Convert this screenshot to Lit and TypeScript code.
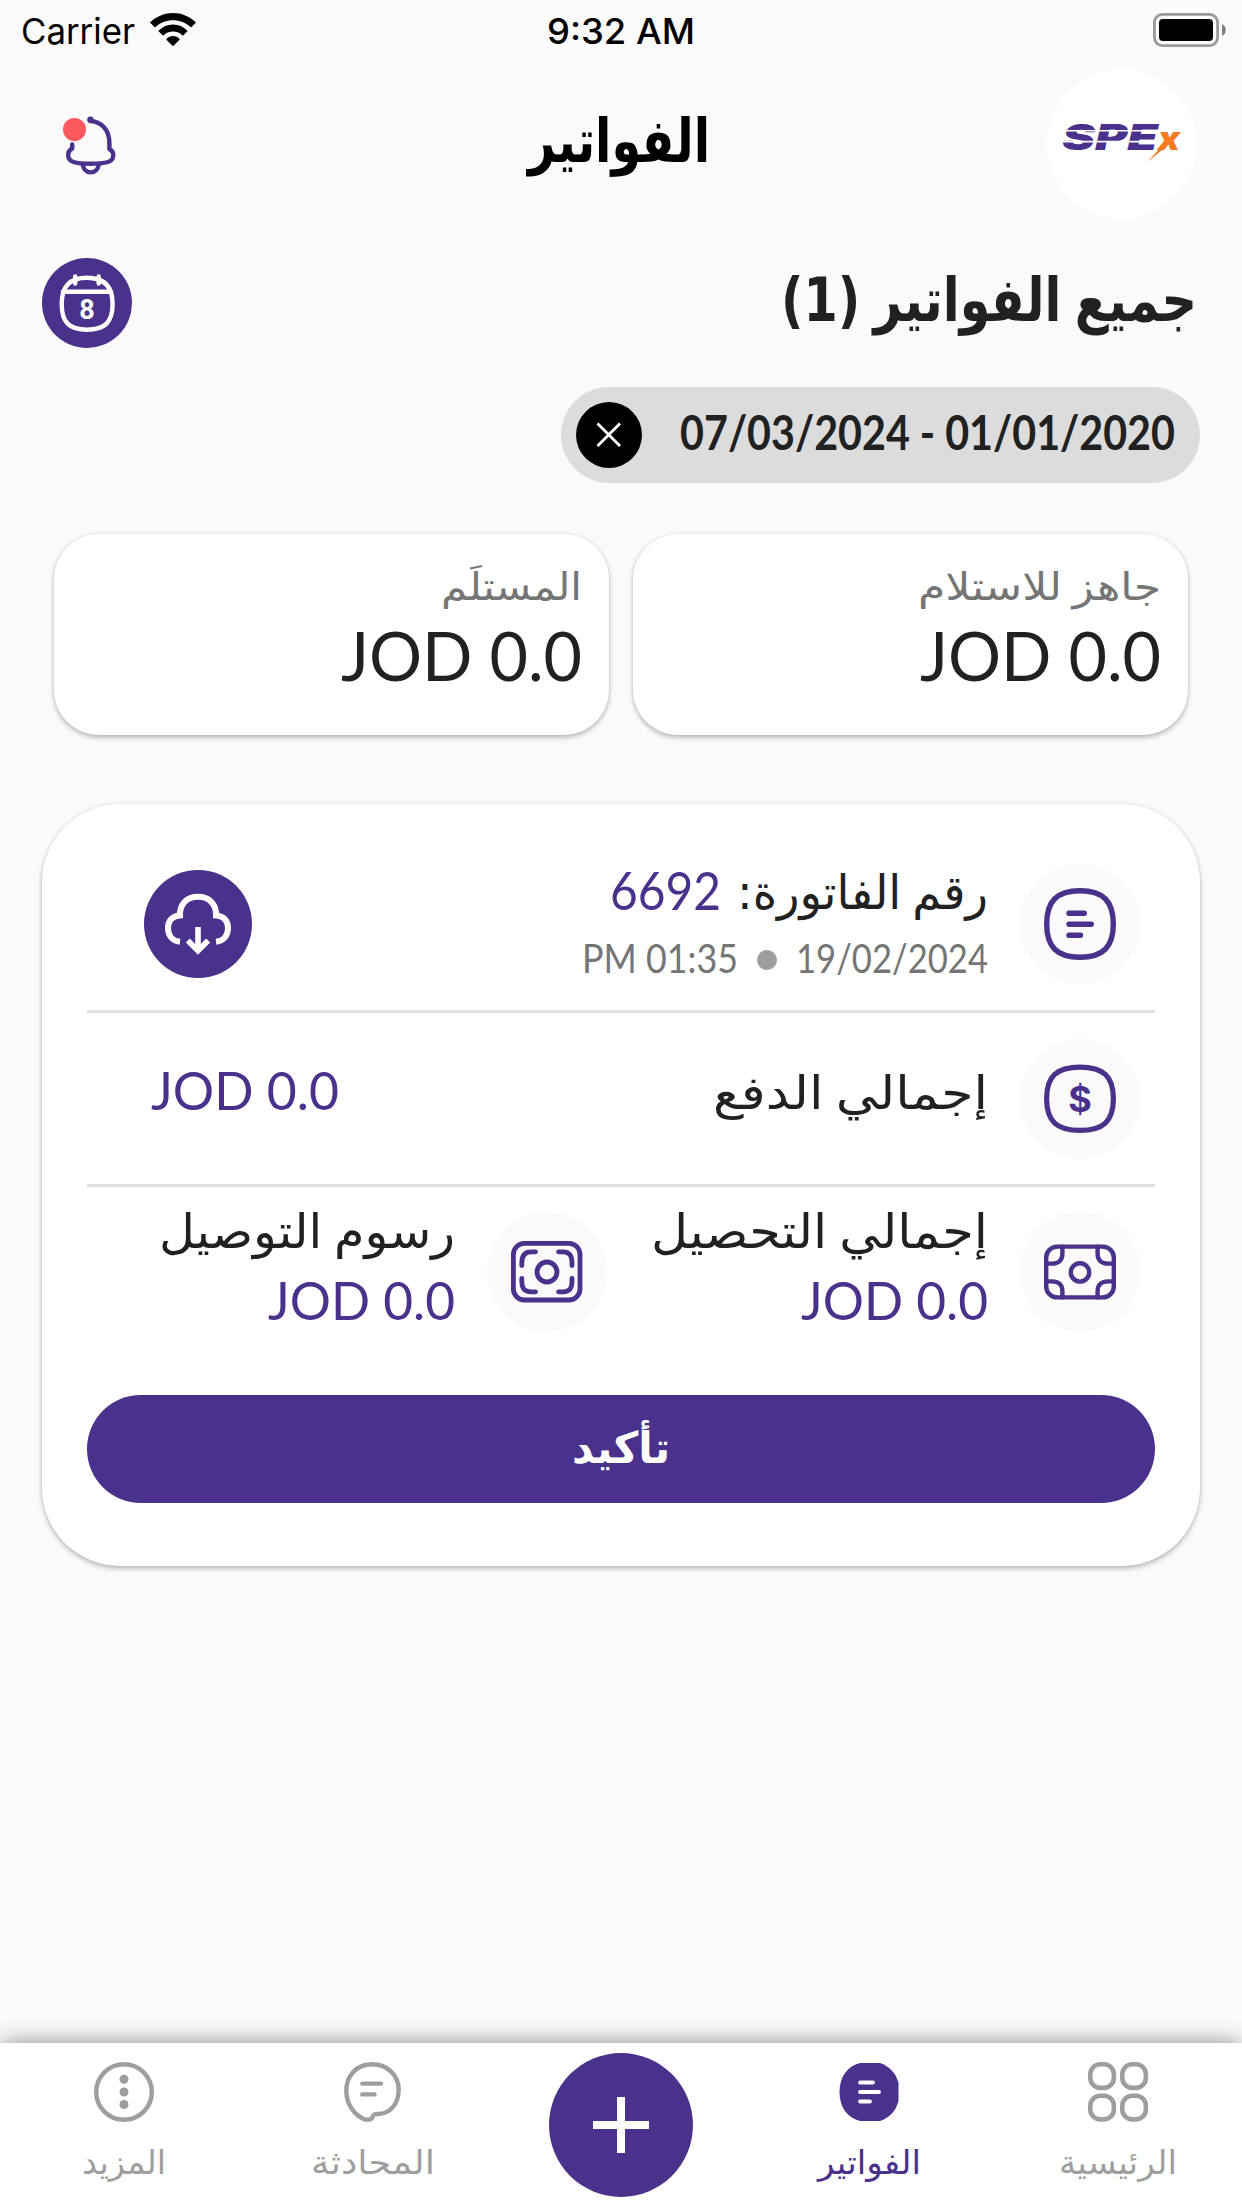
import { LitElement, html, css, svg } from "lit";
import { customElement, property } from "lit/decorators.js";

// Height of an upright stem relative to the font size, per script.
const STEM = { ar: 0.76, la: 0.72, ui: 0.727 };

/** A one-line label whose box is exactly its stem height and text width. */
@customElement("fit-label")
class FitLabel extends LitElement {
  @property() text = "";
  @property({ type: Number }) w = 100;
  @property({ type: Number }) h = 30;
  @property() script: "ar" | "la" | "ui" = "ar";
  static styles = css`
    :host { display: block; flex: none; }
    svg { display: block; overflow: visible; }
    text { fill: currentColor; text-anchor: middle; }
    .ar { font-family: "DejaVu Sans", "Noto Sans", sans-serif; direction: rtl; word-spacing: -0.08em; }
    .la { font-family: Lato, "Open Sans", sans-serif; direction: ltr; }
    .ui { font-family: Inter, Roboto, sans-serif; direction: ltr; }
  `;
  render() {
    return html`<svg width=${this.w} height=${this.h} viewBox="0 0 ${this.w} ${this.h}">
      <text class=${this.script} font-size=${this.h / STEM[this.script]}>${this.text}</text></svg>`;
  }
  updated() {
    const t = this.renderRoot.querySelector("text") as SVGTextElement;
    const natural = t.getComputedTextLength() || this.w;
    t.setAttribute("transform", `translate(${this.w / 2} ${this.h}) scale(${this.w / natural} 1)`);
  }
}

const label = (cls: string, text: string, w: number, h: number, script = "ar") =>
  html`<fit-label class=${cls} .text=${text} .w=${w} .h=${h} .script=${script}></fit-label>`;

const icon = (w: number, h: number, body: unknown) =>
  html`<svg class="icon" width=${w} height=${h} viewBox="0 0 ${w} ${h}">${body}</svg>`;

const icons = {
  wifi: icon(46, 34, svg`<g fill="#000">
    <path d="M0 9.5C13-3.2 33-3.2 46 9.5L41 14.5C31 4.8 15 4.8 5 14.5Z"/>
    <path d="M8.3 18C16.5 9.4 29.5 9.4 37.7 18L32.8 22.8C27.5 17.2 18.5 17.2 13.2 22.8Z"/>
    <path d="M16.2 26.4C20 22 26 22 29.8 26.4L23 33.2Z"/></g>`),
  battery: icon(73, 34, svg`<rect x="1.4" y="1.4" width="63.2" height="31.2" rx="8" fill="none" stroke="#999" stroke-width="2.8"/>
    <rect x="6" y="6" width="54" height="22" rx="4" fill="#000"/>
    <path d="M69 11C74 13.5 74 20.5 69 23Z" fill="#808080"/>`),
  bell: icon(60, 70, svg`<g class="ln" stroke-width="4.4">
    <path d="M30.5 9.5V11C42 12 49.4 20 49.4 33V39C55 42 54.5 50 48 52C40 54.4 21 54.4 13.5 52C7 50 6.3 42 12.2 38.5V34.5"/>
    <path d="M22.8 54.5C24 65 37.5 65 38.7 54.5"/></g><circle cx="30.4" cy="9.7" r="3.2" fill="#49318c"/>`),
  calendar: icon(90, 90, svg`<g class="ln wh" stroke-width="4.4">
    <path d="M19.7 46C19.7 28 28 19.7 45 19.7S70.6 28 70.6 46 63 71.7 45 71.7 19.7 64 19.7 46Z"/>
    <path d="M21 33.7H69M33.2 18.5V25.5M56.7 18.5V25.5"/></g>
    <text x="45" y="61.2" text-anchor="middle" class="day">8</text>`),
  close: icon(26, 26, svg`<path d="M1.5 1.5L24 24M24 1.5L1.5 24" stroke="#fff" stroke-width="2.8" fill="none"/>`),
  bill: icon(72, 72, svg`<g class="ln" stroke-width="5.4"><path d="M2.7 36C2.7 13 13 2.7 36 2.7S69.3 13 69.3 36 59 69.3 36 69.3 2.7 59 2.7 36Z"/>
    <path d="M25 25.2H40.3M25 36.2H47.3M25 47.2H36.5"/></g>`),
  dollar: icon(72, 72, svg`<g class="ln" stroke-width="5.2"><path d="M2.6 35.7C2.6 13 13 4.2 36 4.2S69.4 13 69.4 35.7 59 67.4 36 67.4 2.6 58.5 2.6 35.7Z"/></g>
    <text x="36" y="48.6" text-anchor="middle" class="usd">$</text>`),
  note: icon(72, 56, svg`<g class="ln" stroke-width="4.4"><rect x="2.2" y="2.6" width="67.6" height="50.8" rx="11"/>
    <path d="M2.2 19.6H8C14.5 19.6 18.4 16 18.4 10V2.6M69.8 19.6H64C57.5 19.6 53.6 16 53.6 10V2.6M2.2 37.4H8C14.5 37.4 18.4 41 18.4 47V53.4M69.8 37.4H64C57.5 37.4 53.6 41 53.6 47V53.4"/>
    <circle cx="36" cy="28.4" r="9.2"/></g>`),
  scan: icon(72, 62, svg`<g class="ln" stroke-width="4.8"><rect x="2.4" y="2.4" width="66.6" height="56.6" rx="11"/>
    <path d="M10.8 24.5V22C10.8 14 14 10.8 20 10.8H24.5M61 24.5V22C61 14 58 10.8 52 10.8H47.5M10.8 37.5V40C10.8 48 14 50.8 20 50.8H24.5M61 37.5V40C61 48 58 50.8 52 50.8H47.5"/>
    <circle cx="36" cy="31" r="10"/></g>`),
  cloud: icon(108, 108, svg`<g fill="none" stroke="#fff" stroke-width="6">
    <path d="M36 71.7C28 71 24 65 24 58C24 50.5 29 45.5 36 45.4C35.5 34 43 26.8 54 26.8S72.5 34 72 45.4C79 45.5 84 50.5 84 58C84 65 80 71 72 71.7"/>
    <path d="M54 57V80M43.8 70.5L54 80.7L64.2 70.5" stroke-width="5.6"/></g>`),
  grid: icon(60, 60, svg`<g class="ln" stroke-width="4.6">${[[2, 2], [34, 2], [2, 33.5], [34, 33.5]].map(
    ([x, y]) => svg`<rect x=${x + 0.3} y=${y + 0.3} width="23.6" height="23.6" rx="10"/>`)}</g>`),
  billFill: icon(60, 60, svg`<path fill="#49318c" d="M0.5 30C0.5 14 9 4 21 1H41C50 4 57 11 59.5 21V39C57 49 50 56 41 59H21C9 56 0.5 46 0.5 30Z"/>
    <path class="ln wh" stroke-width="3.8" d="M21 20.5H34M21 30H40M21 39.5H31"/>`),
  chat: icon(57, 60, svg`<g class="ln" stroke-width="4.4"><path d="M28 2.3C44 2.3 54.7 14 54.7 27.5C54.7 42 46 52 34 52C29.5 52 29.5 53 28.3 55.5C27.3 57.8 25 58 21 57.5C10 53 2.3 42 2.3 29C2.3 13 13 2.3 28 2.3Z"/>
    <path d="M18.3 21.6H37M18.3 32.4H30.5"/></g>`),
  more: icon(60, 60, svg`<circle class="ln" stroke-width="4.4" cx="30" cy="30" r="27.8"/>
    ${[17.3, 30, 42.5].map((y) => svg`<circle cx="30" cy=${y} r="4.5" fill="currentColor"/>`)}`),
  plus: icon(56, 56, svg`<path d="M28 0V56M0 28H56" stroke="#fff" stroke-width="8"/>`),
  logo: icon(150, 150, svg`<text class="brand" x="15" y="80.8" textLength="96" lengthAdjust="spacingAndGlyphs">SPE</text>
    <path d="M16 61.8H114M16 72.6H100" stroke="#fff" stroke-width="1.6"/>
    <text class="brandx" x="111" y="80.8" textLength="22" lengthAdjust="spacingAndGlyphs">x</text>
    <path d="M100.5 93L117.5 74L134 62.5L121 76Z" fill="#f47b20"/>`),
};

@customElement("app-root")
class AppRoot extends LitElement {
  static styles = css`
    :host {
      display: flex; flex-direction: column; box-sizing: border-box; width: 1242px; height: 2208px;
      overflow: hidden; background: #fafafa; color: #212121; direction: rtl;
      font-family: "DejaVu Sans", sans-serif; --p: #49318c;
    }
    .icon { display: block; flex: none; overflow: visible; }
    .ln { fill: none; stroke: currentColor; stroke-linecap: round; stroke-linejoin: round; }
    .wh { stroke: #fff; }
    .day { font: 700 27px Roboto, sans-serif; fill: #fff; }
    .usd { font: 700 36px Inter, sans-serif; fill: var(--p); }
    .brand { font: italic 900 35px Inter, sans-serif; fill: var(--p); direction: ltr; }
    .brandx { font: italic 900 33px Inter, sans-serif; fill: #f47b20; direction: ltr; }
    .purple { color: var(--p); }
    .grey { color: #757575; }
    .bold { font-weight: 700; }
    .semi { font-weight: 500; }
    .status {
      direction: ltr; display: grid; grid-template-columns: 1fr auto 1fr; height: 60px; color: #000;
      padding: 0 16px 0 21px; box-sizing: border-box; align-items: start;
    }
    .carrier { display: flex; gap: 15px; padding-top: 13px; }
    .carrier fit-label { margin-top: 5px; }
    .status > fit-label { margin: 18px 3px 0 -3px; }
    .battery { justify-self: end; padding-top: 13px; }
    .head { display: grid; grid-template-columns: 1fr auto 1fr; padding: 9px 45px 0 60px; height: 150px; color: #000; }
    .logo { width: 150px; height: 150px; border-radius: 50%; background: #fff; }
    .head > fit-label { margin: 47px 10px 0 -10px; }
    .bell { position: relative; justify-self: end; margin-top: 41px; color: var(--p); height: 70px; }
    .badge { position: absolute; left: 3px; top: 7.5px; width: 23px; height: 23px; border-radius: 50%; background: #ff5a60; }
    .title { display: flex; justify-content: space-between; padding: 39px 45px 0 42px; height: 90px; }
    .title fit-label { margin-top: 17px; }
    .disc { display: flex; align-items: center; justify-content: center; flex: none; border-radius: 50%; background: var(--p); }
    .d90 { width: 90px; height: 90px; }
    .d108 { width: 108px; height: 108px; }
    .chip {
      align-self: flex-start; display: flex; align-items: center; justify-content: space-between; box-sizing: border-box;
      width: 639px; height: 96px; margin: 39px 42px 0; padding: 0 25px 0 15px; border-radius: 48px; background: #dcdcdc;
    }
    .chip fit-label { margin-bottom: 6px; }
    .x { width: 66px; height: 66px; background: #000; }
    .stats { display: flex; gap: 24px; padding: 0 54px; margin-top: 51px; }
    .card { background: #fff; box-shadow: 0 3px 5px rgba(0,0,0,.22), 0 0 4px rgba(0,0,0,.1); }
    .stat { flex: 1; box-sizing: border-box; height: 201px; border-radius: 45px; padding: 37px 27px 0; display: flex; flex-direction: column; gap: 32px; }
    .invoice { margin: 69px 42px 0; height: 762px; box-sizing: border-box; border-radius: 78px; padding: 34px 45px 0; }
    .row { display: flex; align-items: center; height: 171px; padding: 0 15px; border-bottom: 3px solid #e0e0e0; }
    .row.first { height: 172px; }
    .row.last { border: none; height: 170px; padding-inline-end: 0; }
    .pic { width: 120px; height: 120px; background: #fafafa; color: var(--p); margin-inline-end: 32px; }
    .grow { flex: 1; }
    .pay { margin-bottom: 14px; }
    .lines { display: flex; flex-direction: column; gap: 34px; padding-bottom: 13px; }
    .first .lines { padding-bottom: 3px; }
    .line { display: flex; align-items: center; }
    .number { gap: 16px; }
    .date { gap: 19px; }
    .dot { width: 20px; height: 20px; border-radius: 50%; background: #9e9e9e; margin-top: 4px; }
    .download { margin-inline-end: 42px; }
    .total { margin-inline-end: 49px; }
    .collect { width: 381px; }
    .row .amount { margin-bottom: 15px; }
    .confirm { display: flex; justify-content: center; height: 108px; margin-top: 38px; border-radius: 54px; background: var(--p); color: #fff; }
    .confirm fit-label { margin-top: 35px; }
    .nav {
      margin-top: auto; height: 165px; background: #fff; display: grid; grid-template-columns: repeat(5, 1fr);
      box-shadow: 0 -3px 20px -2px rgba(0,0,0,.42); color: #9e9e9e; justify-items: center;
    }
    .tab { display: flex; flex-direction: column; align-items: center; padding-top: 19px; gap: 27px; }
    .tab.on { color: var(--p); }
    .fab { width: 144px; height: 144px; margin-top: 10px; }
  `;

  stat(name: string, w: number) {
    return html`<div class="card stat">${label("grey", name, w, 29)}${label("", "JOD 0.0", 241, 49, "la")}</div>`;
  }

  tab(pic: unknown, name: string, w: number, on = false) {
    return html`<div class=${on ? "tab on" : "tab"}>${pic}${label("", name, w, 25)}</div>`;
  }

  render() {
    return html`
      <div class="status">
        <div class="carrier">${label("", "Carrier", 114, 26, "ui")}${icons.wifi}</div>
        ${label("semi", "9:32 AM", 148, 26, "ui")}
        <div class="battery">${icons.battery}</div>
      </div>
      <header class="head">
        <div class="logo">${icons.logo}</div>
        ${label("bold", "الفواتير", 182, 46)}
        <div class="bell">${icons.bell}<span class="badge"></span></div>
      </header>
      <section class="title">
        ${label("bold", "جميع الفواتير (1)", 416, 46)}
        <div class="disc d90">${icons.calendar}</div>
      </section>
      <div class="chip">
        ${label("bold", "07/03/2024 - 01/01/2020", 495, 35, "la")}
        <div class="disc x">${icons.close}</div>
      </div>
      <section class="stats">
        ${this.stat("جاهز للاستلام", 243)}${this.stat("المستلَم", 141)}
      </section>
      <section class="card invoice">
        <div class="row first">
          <div class="disc pic">${icons.bill}</div>
          <div class="lines grow">
            <div class="line number">${label("", "رقم الفاتورة:", 251, 36)}${label("purple", "6692", 111, 37, "la")}</div>
            <div class="line date">
              ${label("grey", "19/02/2024", 192, 29, "la")}<span class="dot"></span>${label("grey", "PM 01:35", 156, 29, "la")}
            </div>
          </div>
          <div class="disc d108 download">${icons.cloud}</div>
        </div>
        <div class="row">
          <div class="disc pic">${icons.dollar}</div>
          <div class="grow pay">${label("", "إجمالي الدفع", 275, 35)}</div>
          <div class="total">${label("purple amount", "JOD 0.0", 188, 38, "la")}</div>
        </div>
        <div class="row last">
          <div class="disc pic">${icons.note}</div>
          <div class="lines collect">${label("", "إجمالي التحصيل", 337, 36)}${label("purple", "JOD 0.0", 187, 38, "la")}</div>
          <div class="disc pic">${icons.scan}</div>
          <div class="lines grow">${label("", "رسوم التوصيل", 296, 36)}${label("purple", "JOD 0.0", 187, 38, "la")}</div>
        </div>
        <div class="confirm">${label("bold", "تأكيد", 98, 33)}</div>
      </section>
      <nav class="nav">
        ${this.tab(icons.grid, "الرئيسية", 118)}
        ${this.tab(icons.billFill, "الفواتير", 103, true)}
        <div class="disc fab">${icons.plus}</div>
        ${this.tab(icons.chat, "المحادثة", 124)}
        ${this.tab(icons.more, "المزيد", 84)}
      </nav>`;
  }
}
